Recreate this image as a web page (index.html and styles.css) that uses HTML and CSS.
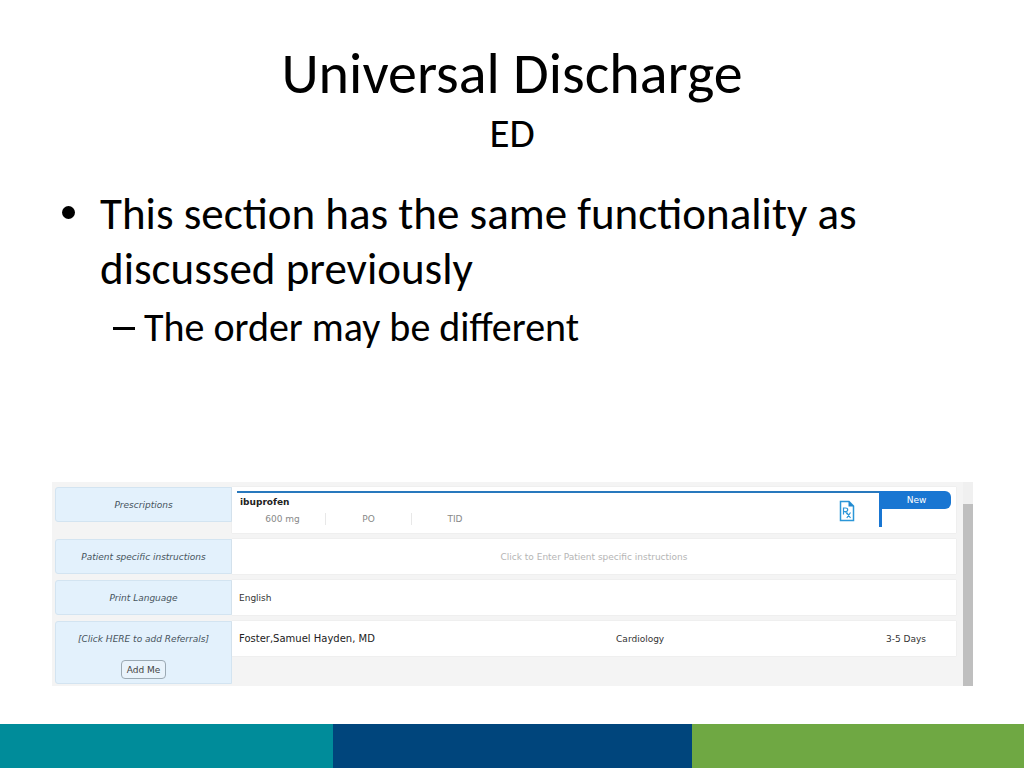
FILE: index.html
```html
<!DOCTYPE html>
<html lang="en">
<head>
<meta charset="utf-8">
<meta name="viewport" content="width=device-width, initial-scale=1">
<title>Universal Discharge</title>
<link rel="stylesheet" href="styles.css">
</head>
<body class="slide">
<header class="heading">
  <h1 class="title">Universal Discharge</h1>
  <p class="subtitle">ED</p>
</header>
<main class="main">
  <ul class="points">
    <li class="point">This section has the same functionality as discussed previously
      <ul class="subpoints">
        <li class="subpoint">The order may be different</li>
      </ul>
    </li>
  </ul>
  <section class="panel" aria-label="Discharge form">
    <div class="rows">
      <div class="row">
        <div class="label">Prescriptions</div>
        <div class="content rx">
          <div class="rx-info">
            <strong class="rx-name">ibuprofen</strong>
            <div class="rx-details"><span class="detail">600 mg</span><span class="detail">PO</span><span class="detail">TID</span></div>
          </div>
          <svg class="rx-icon" viewBox="0 0 16 22" role="img" aria-label="Prescription">
            <path d="M1.500 1.500h8.500l4.500 4.500v14.500h-13z" fill="#fff" stroke="#2b96d8" stroke-width="1.500"/>
            <path d="M9.500 1v5.500h5.500z" fill="#2188cf"/>
            <path d="M4.500 14.500V8h2q2.200 0 2.200 1.800t-2.200 1.800H4.500M6.500 11.600L8.500 14.500M7.800 12.500l3.700 5.500M11.500 12.500l-3.700 5.500" fill="none" stroke="#2b96d8" stroke-width="1.200"/>
          </svg>
          <div class="status"><span class="badge">New</span></div>
        </div>
      </div>
      <div class="row">
        <label class="label" for="instructions">Patient specific instructions</label>
        <div class="content"><input class="entry" id="instructions" type="text" placeholder="Click to Enter Patient specific instructions"></div>
      </div>
      <div class="row">
        <div class="label">Print Language</div>
        <div class="content">English</div>
      </div>
      <div class="row">
        <div class="label referral-label"><span class="referral-title">[Click HERE to add Referrals]</span><button class="add" type="button">Add Me</button></div>
        <div class="content referral"><span class="doctor">Foster,Samuel Hayden, MD</span><span class="specialty">Cardiology</span><span class="days">3-5 Days</span></div>
      </div>
    </div>
    <div class="scrollbar"><div class="thumb"></div></div>
  </section>
</main>
<footer class="stripes"><div class="stripe teal"></div><div class="stripe navy"></div><div class="stripe green"></div></footer>
</body>
</html>
```
FILE: styles.css
```css
* { box-sizing: border-box; }

.slide {
  margin: 0;
  min-height: 100vh;
  display: flex;
  flex-direction: column;
  background: #fff;
  color: #000;
  font-family: Carlito, Lato, sans-serif;
}

.heading { padding-top: 41px; text-align: center; }
.title { margin: 0; font-size: 58px; line-height: 66px; font-weight: 400; }
.subtitle { margin: 0; font-size: 41px; line-height: 52px; }

.main {
  flex: 1;
  display: flex;
  flex-direction: column;
  justify-content: space-between;
  padding: 27px 51px 38px 52px;
}

.points, .subpoints { margin: 0; padding: 0; list-style: none; }
.point {
  position: relative;
  padding: 0 40px 0 48px;
  font-size: 45px;
  line-height: 55px;
}
.point::before {
  content: "";
  position: absolute;
  left: 10px;
  top: 20px;
  width: 13px;
  height: 13px;
  border-radius: 50%;
  background: #000;
}
.subpoints { margin-top: 8px; }
.subpoint {
  position: relative;
  padding-left: 44px;
  font-size: 40px;
  line-height: 48px;
}
.subpoint::before {
  content: "";
  position: absolute;
  left: 13px;
  top: 23px;
  width: 22px;
  height: 3px;
  background: #000;
}

.panel {
  display: flex;
  gap: 7px;
  background: #f4f4f4;
  font-family: "DejaVu Sans", sans-serif;
  font-size: 9px;
  color: #333;
}
.rows {
  flex: 1;
  display: flex;
  flex-direction: column;
  gap: 6px;
  padding: 5px 0 2px 3px;
}
.row {
  display: grid;
  grid-template-columns: 177px 1fr;
  align-items: start;
}
.label {
  display: flex;
  align-items: center;
  justify-content: center;
  height: 35px;
  border: 1px solid #d3e4f1;
  border-radius: 3px 0 0 3px;
  background: #e3f1fc;
  color: #47545c;
  font-style: italic;
}
.content {
  display: flex;
  align-items: center;
  height: 35px;
  padding: 0 7px;
  background: #fff;
  box-shadow: 0 0 1px #d4d4d4;
}

.rx { position: relative; height: 46px; align-items: flex-start; padding: 4px 5px 0; }
.rx-info { flex: 1; padding: 3px 3px 0; border-top: 2px solid #2878bd; }
.rx-name { display: block; line-height: 12px; color: #222; }
.rx-details { display: flex; line-height: 12px; padding-top: 5px; color: #888; }
.detail { width: 86px; text-align: center; border-right: 1px solid #e8e8e8; }
.detail:last-child { border-right: 0; }
.rx-icon { position: absolute; right: 101px; top: 13px; width: 16px; height: 22px; }
.status { width: 72px; height: 36px; border-left: 3px solid #1976d2; }
.badge {
  display: block;
  height: 18px;
  border-radius: 0 6px 6px 0;
  background: #1976d2;
  color: #fff;
  line-height: 18px;
  text-align: center;
}

.entry {
  width: 100%;
  height: 30px;
  padding: 0;
  border: 0;
  background: transparent;
  font: inherit;
  color: #333;
  text-align: center;
}
.entry::placeholder { color: #b5b5b5; opacity: 1; }

.referral-label { flex-direction: column; justify-content: flex-start; height: 63px; }
.referral-title { line-height: 34px; }
.add {
  height: 19px;
  margin-top: 4px;
  padding: 0 5px;
  border: 1px solid #9ba9b3;
  border-radius: 4px;
  background: #e9f3fb;
  color: #444;
  font-family: inherit;
  font-size: 9px;
}
.referral { display: grid; grid-template-columns: 46fr 21fr 33fr; }
.doctor { font-size: 10px; color: #222; }
.specialty { text-align: center; }
.days { padding-right: 23px; text-align: right; }

.scrollbar { width: 10px; padding-top: 22px; background: #f0f0f0; }
.thumb { height: 100%; background: #bfbfbf; }

.stripes { display: flex; height: 44px; }
.teal { flex: 333; background: #008c9a; }
.navy { flex: 359; background: #00457c; }
.green { flex: 332; background: #6fa843; }
```
